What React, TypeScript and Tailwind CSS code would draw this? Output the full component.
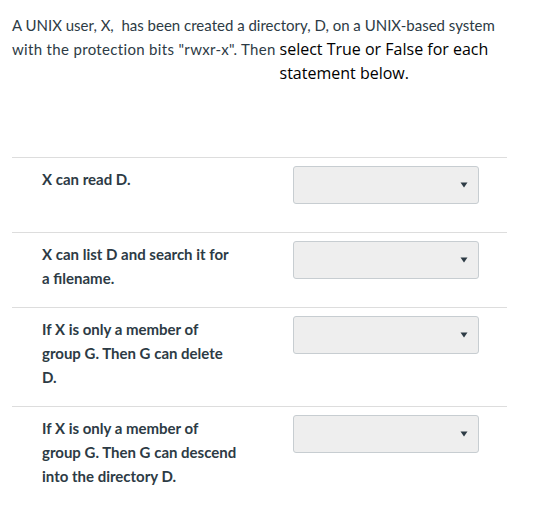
import React from "react";

const statements = [
  "X can read D.",
  "X can list D and search it for a filename.",
  "If X is only a member of group G. Then G can delete D.",
  "If X is only a member of group G. Then G can descend into the directory D.",
];

const Caret = () => (
  <svg width="8" height="6" viewBox="0 0 8 6" className="absolute right-[10px] top-1/2 -translate-y-1/2">
    <path d="M0.5 0.5 H7.5 L4 5.5 Z" fill="#2d3b45" />
  </svg>
);

export default function App() {
  return (
    <div className="w-[545px] h-[513px] bg-white pl-3 pt-[13px] font-['Lato',sans-serif] text-[#2d3b45]">
      <div className="w-[495px] text-[15px] leading-[24px]">
        A UNIX user, X,&nbsp; has been created a directory, D, on a UNIX-based system
        <br />
        <span className="tracking-[0.33px]">with the protection bits "rwxr-x". Then</span>{" "}
        <span className="inline-block align-top w-[220px] font-['Open_Sans',sans-serif] text-[16px] leading-[24px] text-black">
          select True or False for each statement below.
        </span>
      </div>

      <div className="mt-[72px] w-[495px]">
        {statements.map((s, i) => (
          <div key={i} className="flex border-t border-[#dddddd] pt-[8px] pb-[17px]">
            <div className="w-[281px] pl-[30px] pr-[55px] pt-[1px] text-[15px] leading-[24px] font-bold">{s}</div>
            <div className="relative w-[186px] h-[38px] mb-[11px] rounded-[3px] border border-[#c7cdd1] bg-[#eeeeee]">
              <Caret />
            </div>
          </div>
        ))}
      </div>
    </div>
  );
}
